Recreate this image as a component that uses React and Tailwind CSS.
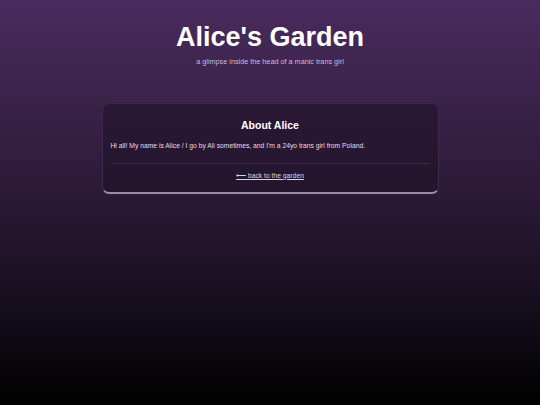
export default function App() {
  return (
    <div className="min-h-[405px] w-full bg-[linear-gradient(to_bottom,#4a2b5e_0%,#3a2249_25%,#2a1936_50%,#160e1d_75%,#000000_100%)] font-['Liberation_Sans',Arial,sans-serif] text-white">
      <header className="flex flex-col items-center pt-[21px]">
        <h1 className="text-[27px] font-bold leading-[32px]">Alice's Garden</h1>
        <p className="mt-[3.5px] text-[7.25px] leading-[9px] text-[#cbbcd4]">a glimpse inside the head of a manic trans girl</p>
      </header>
      <main className="mx-auto mt-[37px] w-[337px] rounded-[7px] border border-[#3d2a4a] border-b-2 border-b-[#9c8aa8] bg-[#1f1228]/60 px-[8px] pt-[15px] pb-[12px]">
        <h2 className="text-center text-[10.5px] font-bold leading-[13px]">About Alice</h2>
        <p className="mt-[9.5px] text-[6.75px] leading-[9px] text-[#e6dcea]">Hi all! My name is Alice / I go by Ali sometimes, and I'm a 24yo trans girl from Poland.</p>
        <div className="mt-[12.5px] border-t border-[#3a2a45]"></div>
        <div className="mt-[7px] text-center text-[6.75px] leading-[9px]">
          <a href="#" className="text-[#ddd4e2] underline">⟵ back to the garden</a>
        </div>
      </main>
    </div>
  );
}
